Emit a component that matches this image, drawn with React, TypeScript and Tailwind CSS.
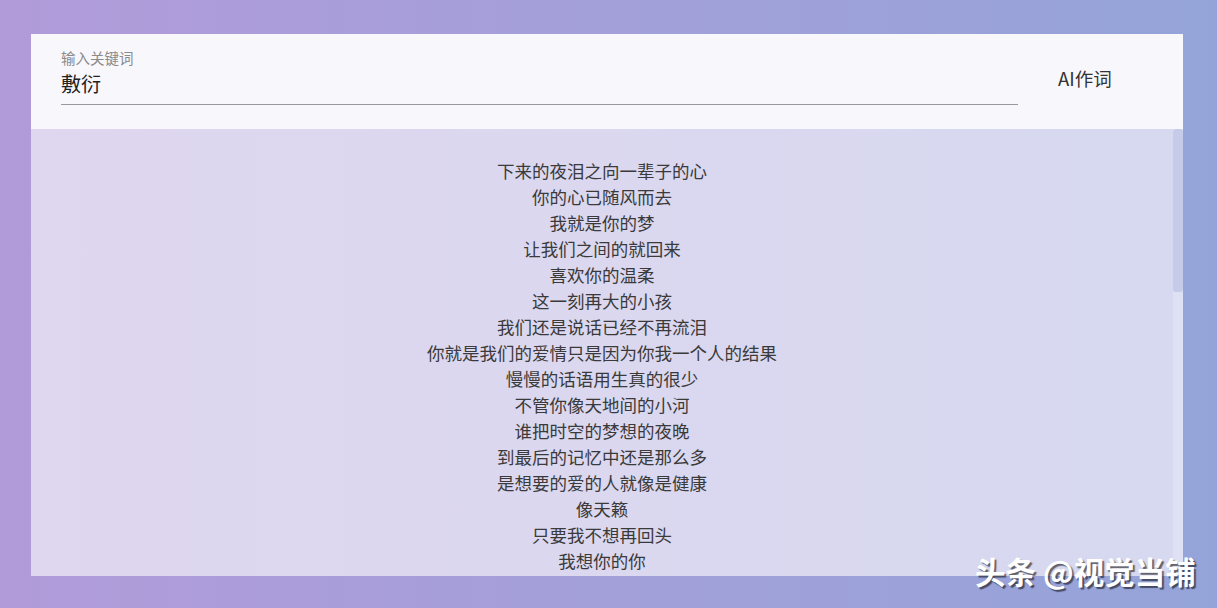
const lyrics = [
  '下来的夜泪之向一辈子的心',
  '你的心已随风而去',
  '我就是你的梦',
  '让我们之间的就回来',
  '喜欢你的温柔',
  '这一刻再大的小孩',
  '我们还是说话已经不再流泪',
  '你就是我们的爱情只是因为你我一个人的结果',
  '慢慢的话语用生真的很少',
  '不管你像天地间的小河',
  '谁把时空的梦想的夜晚',
  '到最后的记忆中还是那么多',
  '是想要的爱的人就像是健康',
  '像天籁',
  '只要我不想再回头',
  '我想你的你',
]

export default function App() {
  return (
    <div
      className="relative h-[608px] w-full overflow-hidden bg-gradient-to-r from-[#b19bd9] to-[#94a4d9] pt-[34px] pl-[31px] pr-[34px] pb-[32px]"
      style={{ fontFamily: '"Noto Sans CJK SC", "Liberation Sans", sans-serif' }}
    >
      <div className="flex h-full flex-col">
        {/* Header with keyword input */}
        <div className="flex h-[95px] shrink-0 items-start bg-[#f8f7fc] pl-[30px]">
          <div className="w-[957px] pt-[15px]">
            <div className="text-[14.5px] leading-[18px] text-[#8a8a8a]">输入关键词</div>
            <div className="mt-[2px] border-b border-[#9a9a9a] pb-[5px] text-[20px] leading-[30px] text-[#222]">
              敷衍
            </div>
          </div>
          <button className="ml-[40px] mt-[30px] text-[18.5px] leading-[28px] text-[#333]">AI作词</button>
        </div>

        {/* Lyrics body */}
        <div className="flex min-h-0 flex-1 bg-gradient-to-r from-[#dfd6ef] to-[#d6d9f0]">
          <div className="flex-1 overflow-hidden pt-[29px] text-center text-[17.5px] leading-[26px] text-[#3a3a3a]">
            {lyrics.map((line, i) => (
              <div key={i}>{line}</div>
            ))}
          </div>
          <div className="w-[10px] bg-white/20">
            <div className="h-[163px] rounded-[3px] bg-[#c5cbe8]" />
          </div>
        </div>
      </div>

      {/* Watermark */}
      <div
        className="absolute left-[975px] top-[552px] text-[30.5px] font-bold leading-[38px] text-white"
        style={{ textShadow: '2px 2px 1px rgba(0,0,0,0.55)' }}
      >
        头条 @视觉当铺
      </div>
    </div>
  )
}
